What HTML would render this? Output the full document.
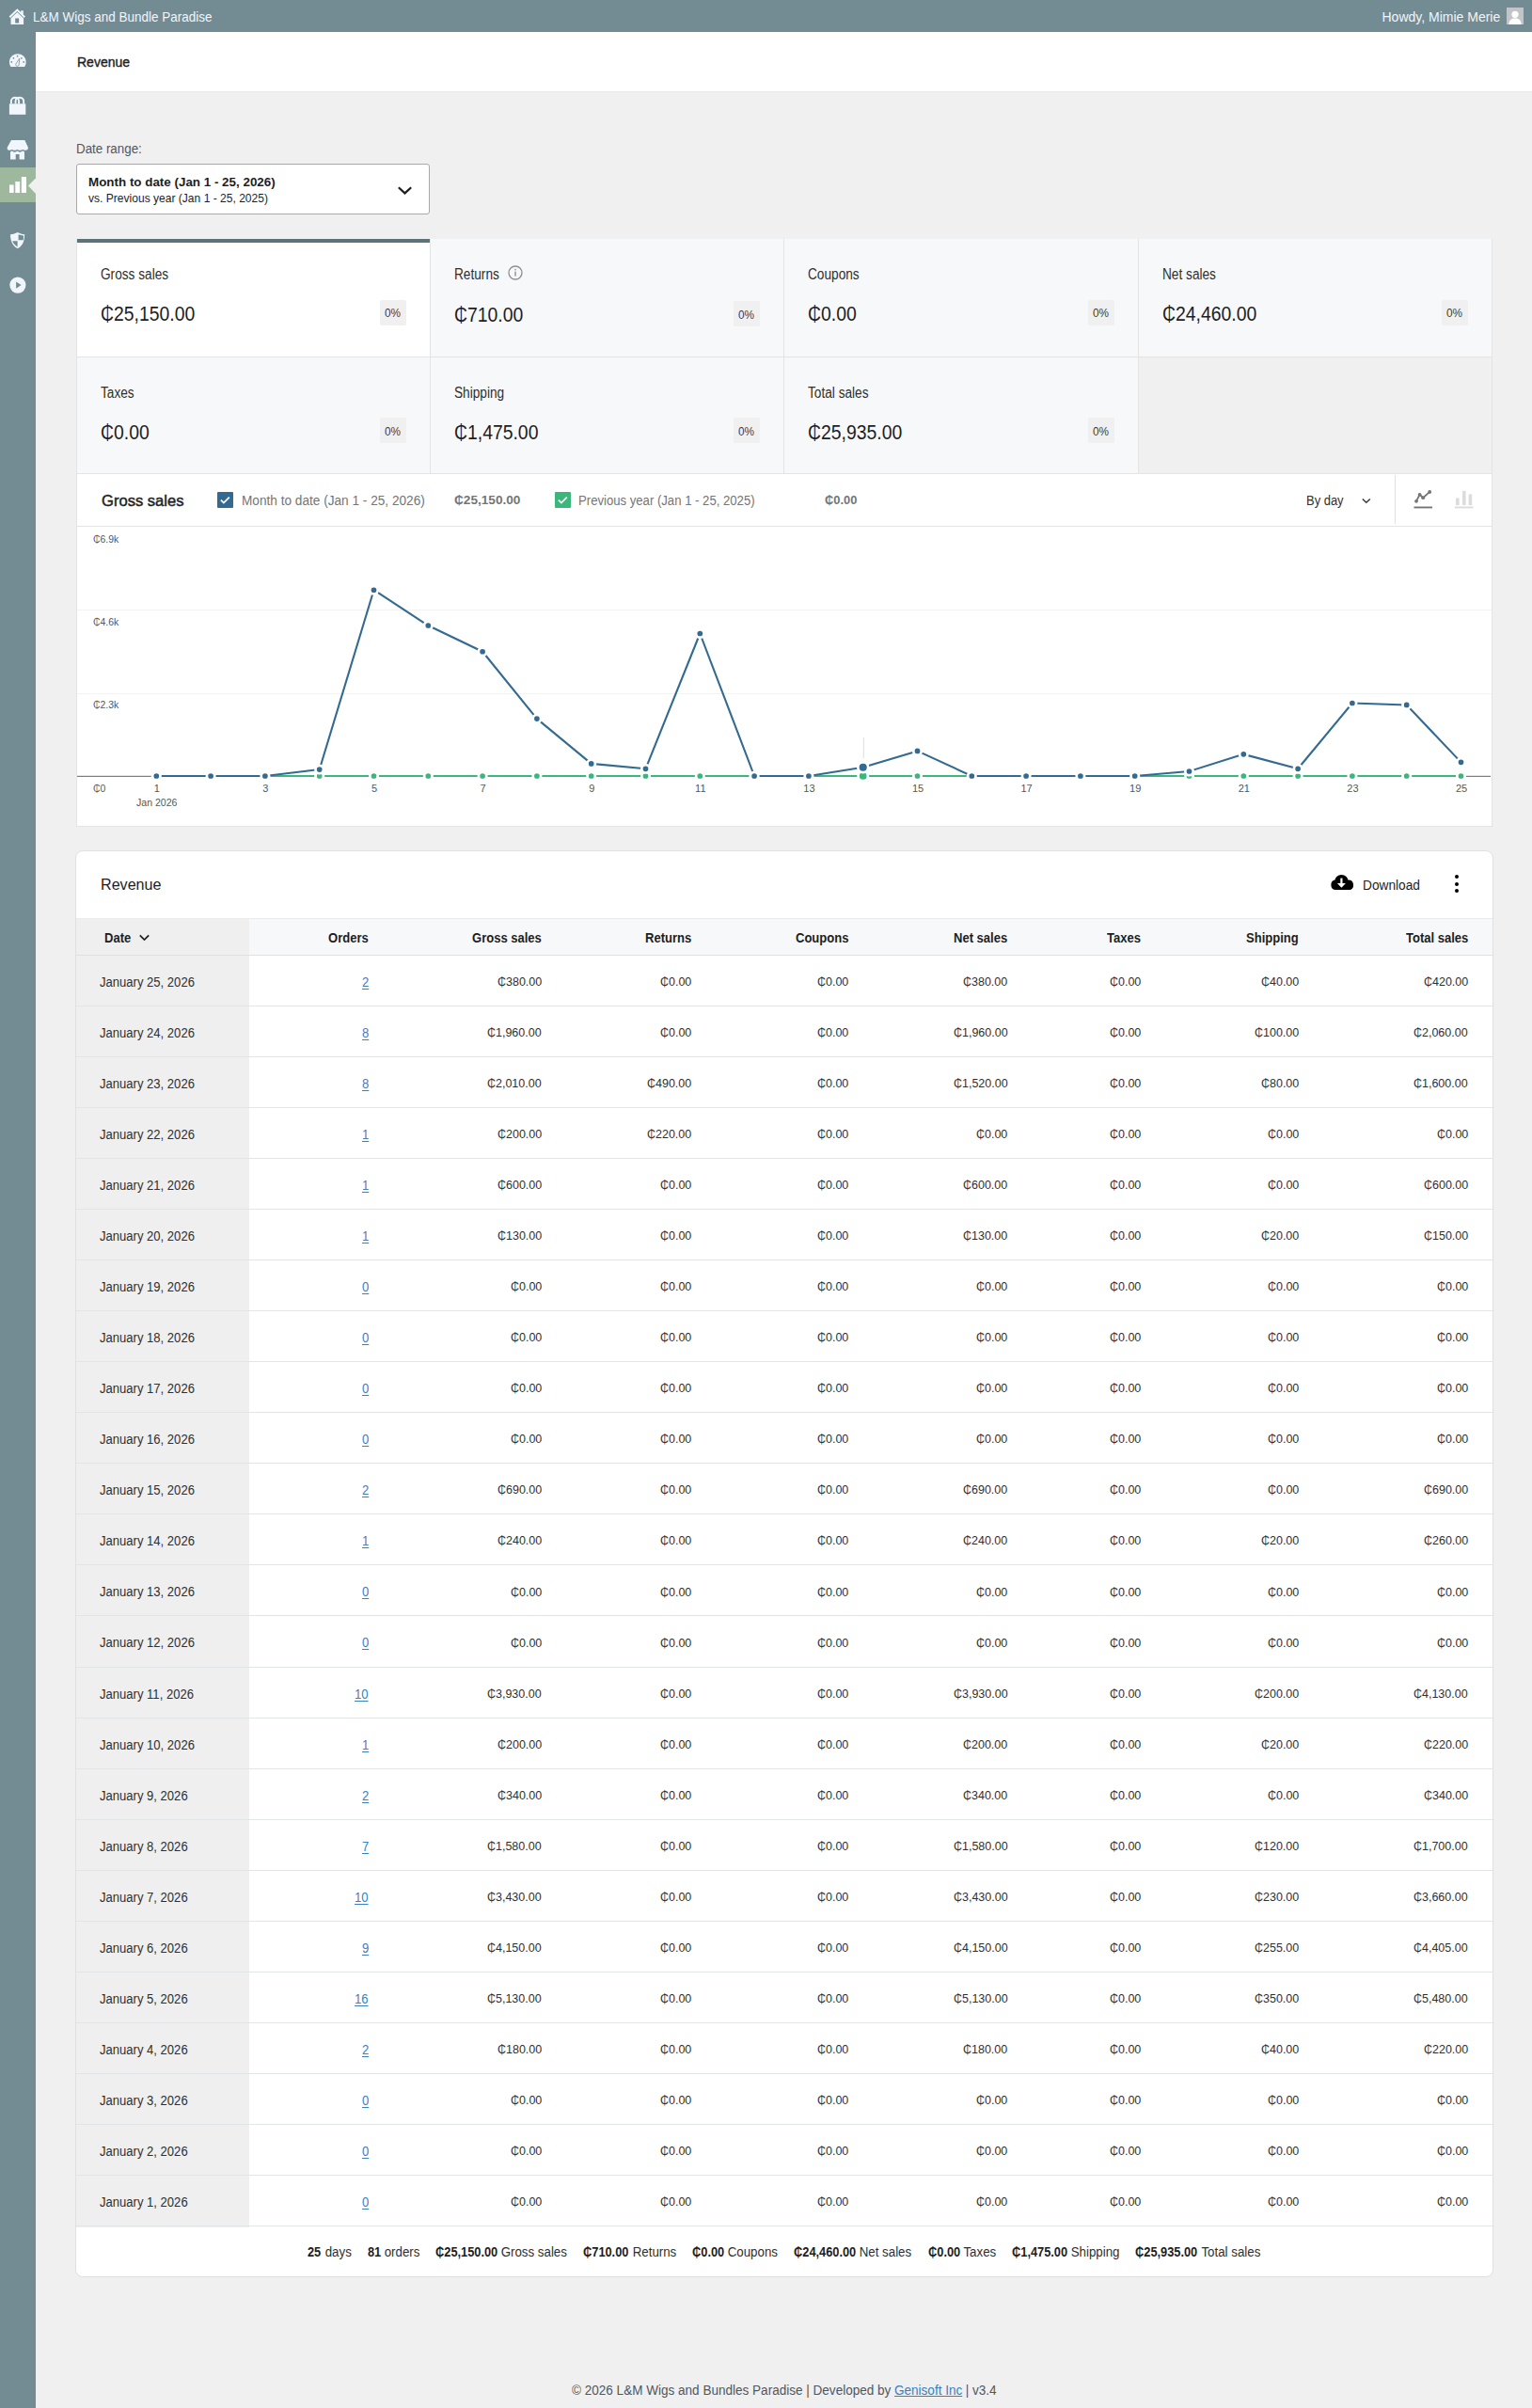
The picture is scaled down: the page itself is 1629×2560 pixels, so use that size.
<!DOCTYPE html>
<html><head><meta charset="utf-8"><title>Revenue</title>
<style>
html,body{margin:0;padding:0}
body{width:1629px;height:2560px;position:relative;overflow:hidden;background:#f0f0f0;font-family:"Liberation Sans",sans-serif}
.t{position:absolute;line-height:20px;white-space:nowrap}
svg{display:block}
</style></head><body>
<div style="position:absolute;left:0.00px;top:0.00px;width:1629.00px;height:34.00px;background:#738b93"></div>
<div style="position:absolute;left:0.00px;top:34.00px;width:38.00px;height:2526.00px;background:#738b93"></div>
<div style="position:absolute;left:38.00px;top:34.00px;width:1591.00px;height:63.50px;background:#fff"></div>
<div style="position:absolute;left:38.00px;top:96.50px;width:1591.00px;height:1.00px;background:#e9e9e9"></div>
<svg style="position:absolute;left:0;top:0" width="38" height="34" viewBox="0 0 38 34"><g fill="#f0f6fc"><path d="M9.6 17.5 L18.3 9.2 L22.2 12.9 L22.2 11.2 L24.8 11.2 L24.8 15.4 L27 17.5 L25.6 18.9 L18.3 11.9 L11 18.9 Z"/><path fill-rule="evenodd" d="M11.5 19.6 L18.3 13.1 L25.1 19.6 L25.1 26.1 L11.5 26.1 Z M16.2 19.6 L16.2 24.5 L20.1 24.5 L20.1 19.6 Z"/></g></svg>
<div class="t" style="left:35.20px;top:8.45px;font-size:14px;color:#f0f6fc;transform:scaleX(0.9632);transform-origin:0 0;">L&amp;M Wigs and Bundle Paradise</div>
<div class="t" style="left:1469.50px;top:8.35px;font-size:14px;color:#f0f6fc;">Howdy, Mimie Merie</div>
<svg style="position:absolute;left:1602px;top:8px" width="18" height="18" viewBox="0 0 18 18"><rect width="18" height="18" fill="#c3c4c7"/><circle cx="9" cy="7.3" r="3.6" fill="#fff"/><path d="M2.3 18 C2.6 13.4 5.2 11.6 9 11.6 C12.8 11.6 15.4 13.4 15.7 18 Z" fill="#fff"/></svg>
<svg style="position:absolute;left:0;top:34px" width="38" height="300" viewBox="0 34 38 300">
<path fill="#f0f6fc" d="M11.4 71 A8.9 8.9 0 1 1 26.2 71 Z"/>
<g fill="#738b93"><circle cx="18.6" cy="59.7" r="0.85"/><circle cx="14.4" cy="61.8" r="0.85"/><circle cx="22.9" cy="61.8" r="0.85"/><circle cx="12.3" cy="65.9" r="0.85"/><circle cx="25.2" cy="65.9" r="0.85"/></g>
<path d="M20.8 62.2 L17.3 67.3 A1.75 1.75 0 1 0 20.2 68.3 Z" fill="none" stroke="#738b93" stroke-width="0.75"/>
<rect x="9.9" y="110.3" width="17.4" height="11.5" fill="#f0f6fc"/>
<path d="M11.9 110.6 L11.9 107.5 A4.1 3.75 0 0 1 20.1 107.5 L20.1 110.6" fill="none" stroke="#f0f6fc" stroke-width="1.95"/>
<path d="M16.55 110.6 L16.55 107.5 A4.3 3.75 0 0 1 25.15 107.5 L25.15 110.6" fill="none" stroke="#f0f6fc" stroke-width="1.95"/>
<path fill="#f0f6fc" d="M12 149.1 L26.3 149.1 L29.9 156.8 C30.1 158.6 29 159.8 27.3 159.8 C25.9 159.8 25.2 158.9 24.3 158.9 C23.4 158.9 22.6 159.8 21.2 159.8 C19.8 159.8 19.2 158.9 18.4 158.9 C17.6 158.9 17 159.8 15.6 159.8 C14.2 159.8 13.5 158.9 12.6 158.9 C11.7 158.9 11 159.8 9.7 159.8 C8.2 159.8 7.5 158.6 7.7 156.8 Z"/>
<path fill="#f0f6fc" fill-rule="evenodd" d="M11 161.4 C11.8 161.2 12.2 160.6 12.7 160.6 C13.3 160.6 14 161.8 15.6 161.8 C17.2 161.8 17.8 160.6 18.4 160.6 C19 160.6 19.7 161.8 21.2 161.8 C22.7 161.8 23.4 160.6 24.1 160.6 C24.7 160.6 25.2 161.2 26 161.4 L26 169.6 L20.6 169.6 L20.6 164.1 L16.7 164.1 L16.7 169.6 L11 169.6 Z"/>
<path fill="#f0f6fc" d="M18.7 247 C16.5 248.3 13.8 249 11 249.2 C11 256.4 13.3 261.3 18.7 264.3 C24.1 261.3 26.2 256.4 26.2 249.2 C23.5 249 20.9 248.3 18.7 247 Z"/>
<path fill="#738b93" d="M19.6 249.2 L19.6 255.3 L24.8 255.3 C24.9 253.9 25 252.4 25 250.5 C23.1 250.3 21.3 249.9 19.6 249.2 Z"/>
<path fill="#738b93" d="M18.6 256.3 L18.6 262.4 C15.8 260.6 14 258.6 13.2 256.3 Z"/>
<circle cx="18.9" cy="303.1" r="8.6" fill="#f0f6fc"/>
<path fill="#738b93" d="M17.1 299.6 L22.6 303.1 L17.1 306.8 Z"/>
</svg>
<div style="position:absolute;left:0.00px;top:177.70px;width:38.00px;height:37.00px;background:#9db89d"></div>
<svg style="position:absolute;left:29.9px;top:189px" width="8.2" height="17.2" viewBox="0 0 8.2 17.2"><path d="M8.2 0 L0 8.6 L8.2 17.2 Z" fill="#f0f0f0"/></svg>
<svg style="position:absolute;left:9.7px;top:187.5px" width="18.5" height="17.5" viewBox="0 0 18.5 17.5"><rect x="0" y="8.5" width="4.6" height="9" fill="#fff"/><rect x="6.3" y="5" width="4.8" height="12.5" fill="#fff"/><rect x="12.8" y="0" width="5.4" height="17.5" fill="#fff"/></svg>
<div class="t" style="left:81.50px;top:55.90px;font-size:15px;color:#1e1e1e;transform:scaleX(0.9326);transform-origin:0 0;-webkit-text-stroke:0.4px #1e1e1e;">Revenue</div>
<div class="t" style="left:81.00px;top:148.15px;font-size:14px;color:#50575e;transform:scaleX(0.9541);transform-origin:0 0;">Date range:</div>
<div style="position:absolute;left:81.00px;top:174.40px;width:376.00px;height:53.20px;background:#fff;border:1px solid #a9a9a9;border-radius:3px;box-sizing:border-box"></div>
<div class="t" style="left:94.30px;top:184.32px;font-size:13.5px;color:#1e1e1e;font-weight:bold;transform:scaleX(0.9920);transform-origin:0 0;">Month to date (Jan 1 - 25, 2026)</div>
<div class="t" style="left:94.30px;top:201.29px;font-size:13px;color:#1e1e1e;transform:scaleX(0.9275);transform-origin:0 0;">vs. Previous year (Jan 1 - 25, 2025)</div>
<svg style="position:absolute;left:422px;top:196px" width="17" height="13" viewBox="0 0 17 13"><path d="M1.8 3.2 L8.5 9.4 L15.2 3.2" fill="none" stroke="#1e1e1e" stroke-width="2.2"/></svg>
<div style="position:absolute;left:81.00px;top:254.00px;width:1506.00px;height:249.50px;background:#f7f8f9"></div>
<div style="position:absolute;left:81.00px;top:254.00px;width:376.40px;height:125.50px;background:#fff"></div>
<div style="position:absolute;left:81.00px;top:254.00px;width:376.40px;height:4.30px;background:#5d737a"></div>
<div style="position:absolute;left:1210.40px;top:379.20px;width:376.10px;height:124.00px;background:#f0f0f0"></div>
<div style="position:absolute;left:456.90px;top:254.00px;width:1.00px;height:249.50px;background:#e4e4e4"></div>
<div style="position:absolute;left:833.00px;top:254.00px;width:1.00px;height:249.50px;background:#e4e4e4"></div>
<div style="position:absolute;left:1209.90px;top:254.00px;width:1.00px;height:249.50px;background:#e4e4e4"></div>
<div style="position:absolute;left:81.00px;top:378.60px;width:1506.00px;height:1.20px;background:#e4e4e4"></div>
<div style="position:absolute;left:81.00px;top:254.00px;width:1.00px;height:625.00px;background:#e4e4e4"></div>
<div style="position:absolute;left:1586.00px;top:254.00px;width:1.00px;height:625.00px;background:#e4e4e4"></div>
<div class="t" style="left:106.70px;top:281.95px;font-size:16px;color:#2f2f2f;transform:scaleX(0.8536);transform-origin:0 0;">Gross sales</div>
<div class="t" style="left:106.70px;top:324.07px;font-size:22.3px;color:#1e1e1e;transform:scaleX(0.8689);transform-origin:0 0;">₵25,150.00</div>
<div style="position:absolute;left:403.60px;top:318.50px;width:28.00px;height:27.00px;background:#f0f0f0;border-radius:2px"></div>
<div class="t" style="left:408.90px;top:323.47px;font-size:12.5px;color:#3c3c3c;transform:scaleX(0.9410);transform-origin:0 0;">0%</div>
<div class="t" style="left:483.10px;top:281.95px;font-size:16px;color:#2f2f2f;transform:scaleX(0.8536);transform-origin:0 0;">Returns</div>
<div class="t" style="left:483.10px;top:325.37px;font-size:22.3px;color:#1e1e1e;transform:scaleX(0.8689);transform-origin:0 0;">₵710.00</div>
<div style="position:absolute;left:779.70px;top:319.80px;width:28.00px;height:27.00px;background:#f0f0f0;border-radius:2px"></div>
<div class="t" style="left:785.00px;top:324.77px;font-size:12.5px;color:#3c3c3c;transform:scaleX(0.9410);transform-origin:0 0;">0%</div>
<div class="t" style="left:859.20px;top:281.95px;font-size:16px;color:#2f2f2f;transform:scaleX(0.8536);transform-origin:0 0;">Coupons</div>
<div class="t" style="left:859.20px;top:324.07px;font-size:22.3px;color:#1e1e1e;transform:scaleX(0.8689);transform-origin:0 0;">₵0.00</div>
<div style="position:absolute;left:1156.60px;top:318.50px;width:28.00px;height:27.00px;background:#f0f0f0;border-radius:2px"></div>
<div class="t" style="left:1161.90px;top:323.47px;font-size:12.5px;color:#3c3c3c;transform:scaleX(0.9410);transform-origin:0 0;">0%</div>
<div class="t" style="left:1236.10px;top:281.95px;font-size:16px;color:#2f2f2f;transform:scaleX(0.8536);transform-origin:0 0;">Net sales</div>
<div class="t" style="left:1236.10px;top:324.07px;font-size:22.3px;color:#1e1e1e;transform:scaleX(0.8689);transform-origin:0 0;">₵24,460.00</div>
<div style="position:absolute;left:1532.70px;top:318.50px;width:28.00px;height:27.00px;background:#f0f0f0;border-radius:2px"></div>
<div class="t" style="left:1538.00px;top:323.47px;font-size:12.5px;color:#3c3c3c;transform:scaleX(0.9410);transform-origin:0 0;">0%</div>
<div class="t" style="left:106.70px;top:407.65px;font-size:16px;color:#2f2f2f;transform:scaleX(0.8536);transform-origin:0 0;">Taxes</div>
<div class="t" style="left:106.70px;top:449.57px;font-size:22.3px;color:#1e1e1e;transform:scaleX(0.8689);transform-origin:0 0;">₵0.00</div>
<div style="position:absolute;left:403.60px;top:443.70px;width:28.00px;height:27.00px;background:#f0f0f0;border-radius:2px"></div>
<div class="t" style="left:408.90px;top:448.67px;font-size:12.5px;color:#3c3c3c;transform:scaleX(0.9410);transform-origin:0 0;">0%</div>
<div class="t" style="left:483.10px;top:407.65px;font-size:16px;color:#2f2f2f;transform:scaleX(0.8536);transform-origin:0 0;">Shipping</div>
<div class="t" style="left:483.10px;top:449.57px;font-size:22.3px;color:#1e1e1e;transform:scaleX(0.8689);transform-origin:0 0;">₵1,475.00</div>
<div style="position:absolute;left:779.70px;top:443.70px;width:28.00px;height:27.00px;background:#f0f0f0;border-radius:2px"></div>
<div class="t" style="left:785.00px;top:448.67px;font-size:12.5px;color:#3c3c3c;transform:scaleX(0.9410);transform-origin:0 0;">0%</div>
<div class="t" style="left:859.20px;top:407.65px;font-size:16px;color:#2f2f2f;transform:scaleX(0.8536);transform-origin:0 0;">Total sales</div>
<div class="t" style="left:859.20px;top:449.57px;font-size:22.3px;color:#1e1e1e;transform:scaleX(0.8689);transform-origin:0 0;">₵25,935.00</div>
<div style="position:absolute;left:1156.60px;top:443.70px;width:28.00px;height:27.00px;background:#f0f0f0;border-radius:2px"></div>
<div class="t" style="left:1161.90px;top:448.67px;font-size:12.5px;color:#3c3c3c;transform:scaleX(0.9410);transform-origin:0 0;">0%</div>
<svg style="position:absolute;left:539.6px;top:282.4px" width="16" height="16" viewBox="0 0 16 16"><circle cx="8" cy="8" r="7" fill="none" stroke="#8f8f8f" stroke-width="1.3"/><rect x="7.3" y="6.6" width="1.4" height="5.0" fill="#8f8f8f"/><rect x="7.3" y="3.9" width="1.4" height="1.5" fill="#8f8f8f"/></svg>
<div style="position:absolute;left:81.00px;top:503.20px;width:1506.00px;height:375.50px;background:#fff;border:1px solid #e4e4e4;box-sizing:border-box"></div>
<div style="position:absolute;left:81.00px;top:559.00px;width:1506.00px;height:1.00px;background:#e4e4e4"></div>
<div style="position:absolute;left:1483.00px;top:504.70px;width:1.00px;height:52.00px;background:#e0e0e0"></div>
<div class="t" style="left:107.60px;top:523.41px;font-size:17px;color:#1e1e1e;transform:scaleX(0.9749);transform-origin:0 0;-webkit-text-stroke:0.45px #1e1e1e;">Gross sales</div>
<svg style="position:absolute;left:230.8px;top:522.8px" width="17" height="17" viewBox="0 0 17 17"><rect x="0" y="0" width="17" height="17" rx="1" fill="#336a91"/><path d="M3.9 8.7 L6.9 11.6 L12.8 5.6" fill="none" stroke="#fff" stroke-width="1.8"/></svg>
<div class="t" style="left:256.90px;top:522.25px;font-size:14px;color:#757575;transform:scaleX(0.9739);transform-origin:0 0;">Month to date (Jan 1 - 25, 2026)</div>
<div class="t" style="left:482.60px;top:522.12px;font-size:13.5px;color:#757575;font-weight:bold;transform:scaleX(1.0085);transform-origin:0 0;">₵25,150.00</div>
<svg style="position:absolute;left:589.7px;top:522.8px" width="17" height="17" viewBox="0 0 17 17"><rect x="0" y="0" width="17" height="17" rx="1" fill="#3bb77b"/><path d="M3.9 8.7 L6.9 11.6 L12.8 5.6" fill="none" stroke="#fff" stroke-width="1.8"/></svg>
<div class="t" style="left:615.40px;top:522.25px;font-size:14px;color:#757575;transform:scaleX(0.9380);transform-origin:0 0;">Previous year (Jan 1 - 25, 2025)</div>
<div class="t" style="left:876.70px;top:522.12px;font-size:13.5px;color:#757575;font-weight:bold;transform:scaleX(0.9521);transform-origin:0 0;">₵0.00</div>
<div class="t" style="left:1388.70px;top:522.45px;font-size:14px;color:#2f2f2f;transform:scaleX(0.9252);transform-origin:0 0;">By day</div>
<svg style="position:absolute;left:1446px;top:527px" width="13" height="10" viewBox="1446 527 13 10"><path d="M1448.8 530.5 L1452.8 534.3 L1456.8 530.5" fill="none" stroke="#3a3a3a" stroke-width="1.5"/></svg>
<svg style="position:absolute;left:1503px;top:521px" width="21" height="21" viewBox="0 0 21 21"><path d="M3 11.8 L6.6 4.8 L10.2 8.2 L17.2 1.8" fill="none" stroke="#757575" stroke-width="1.8"/><circle cx="3" cy="11.8" r="1.9" fill="#757575"/><circle cx="6.6" cy="4.8" r="1.9" fill="#757575"/><circle cx="10.2" cy="8.2" r="1.9" fill="#757575"/><circle cx="17.2" cy="2" r="1.9" fill="#757575"/><rect x="0.5" y="17.5" width="19.5" height="1.9" fill="#757575"/></svg>
<svg style="position:absolute;left:1546.5px;top:521px" width="21" height="21" viewBox="0 0 21 21"><rect x="1" y="8.5" width="3.6" height="7.6" fill="#dcdcde"/><rect x="8" y="1" width="3.6" height="15.1" fill="#dcdcde"/><rect x="14.6" y="4.5" width="3.6" height="11.6" fill="#dcdcde"/><rect x="0" y="17.5" width="19.5" height="1.9" fill="#dcdcde"/></svg>
<svg style="position:absolute;left:81px;top:560px" width="1505" height="318" viewBox="81 560 1505 318"><rect x="82" y="648" width="1504" height="1" fill="#f2f2f2"/><rect x="82" y="737" width="1504" height="1" fill="#f2f2f2"/><rect x="82" y="824.8" width="1503" height="1.1" fill="#707070"/><rect x="917.8" y="784" width="1" height="22" fill="#dcdcde"/><polyline points="166.30,825.00 224.10,825.00 281.90,825.00 339.70,825.00 397.50,825.00 455.30,825.00 513.10,825.00 570.90,825.00 628.70,825.00 686.50,825.00 744.30,825.00 802.10,825.00 859.90,825.00 917.70,825.00 975.50,825.00 1033.30,825.00 1091.10,825.00 1148.90,825.00 1206.70,825.00 1264.50,825.00 1322.30,825.00 1380.10,825.00 1437.90,825.00 1495.70,825.00 1553.50,825.00" fill="none" stroke="#3bb77b" stroke-width="2.1"/><circle cx="166.30" cy="825.0" r="4.2" fill="#3bb77b" stroke="#fff" stroke-width="2.7"/><circle cx="224.10" cy="825.0" r="4.2" fill="#3bb77b" stroke="#fff" stroke-width="2.7"/><circle cx="281.90" cy="825.0" r="4.2" fill="#3bb77b" stroke="#fff" stroke-width="2.7"/><circle cx="339.70" cy="825.0" r="4.2" fill="#3bb77b" stroke="#fff" stroke-width="2.7"/><circle cx="397.50" cy="825.0" r="4.2" fill="#3bb77b" stroke="#fff" stroke-width="2.7"/><circle cx="455.30" cy="825.0" r="4.2" fill="#3bb77b" stroke="#fff" stroke-width="2.7"/><circle cx="513.10" cy="825.0" r="4.2" fill="#3bb77b" stroke="#fff" stroke-width="2.7"/><circle cx="570.90" cy="825.0" r="4.2" fill="#3bb77b" stroke="#fff" stroke-width="2.7"/><circle cx="628.70" cy="825.0" r="4.2" fill="#3bb77b" stroke="#fff" stroke-width="2.7"/><circle cx="686.50" cy="825.0" r="4.2" fill="#3bb77b" stroke="#fff" stroke-width="2.7"/><circle cx="744.30" cy="825.0" r="4.2" fill="#3bb77b" stroke="#fff" stroke-width="2.7"/><circle cx="802.10" cy="825.0" r="4.2" fill="#3bb77b" stroke="#fff" stroke-width="2.7"/><circle cx="859.90" cy="825.0" r="4.2" fill="#3bb77b" stroke="#fff" stroke-width="2.7"/><circle cx="917.70" cy="825.0" r="5.2" fill="#3bb77b" stroke="#fff" stroke-width="2.7"/><circle cx="975.50" cy="825.0" r="4.2" fill="#3bb77b" stroke="#fff" stroke-width="2.7"/><circle cx="1033.30" cy="825.0" r="4.2" fill="#3bb77b" stroke="#fff" stroke-width="2.7"/><circle cx="1091.10" cy="825.0" r="4.2" fill="#3bb77b" stroke="#fff" stroke-width="2.7"/><circle cx="1148.90" cy="825.0" r="4.2" fill="#3bb77b" stroke="#fff" stroke-width="2.7"/><circle cx="1206.70" cy="825.0" r="4.2" fill="#3bb77b" stroke="#fff" stroke-width="2.7"/><circle cx="1264.50" cy="825.0" r="4.2" fill="#3bb77b" stroke="#fff" stroke-width="2.7"/><circle cx="1322.30" cy="825.0" r="4.2" fill="#3bb77b" stroke="#fff" stroke-width="2.7"/><circle cx="1380.10" cy="825.0" r="4.2" fill="#3bb77b" stroke="#fff" stroke-width="2.7"/><circle cx="1437.90" cy="825.0" r="4.2" fill="#3bb77b" stroke="#fff" stroke-width="2.7"/><circle cx="1495.70" cy="825.0" r="4.2" fill="#3bb77b" stroke="#fff" stroke-width="2.7"/><circle cx="1553.50" cy="825.0" r="4.2" fill="#3bb77b" stroke="#fff" stroke-width="2.7"/><polyline points="166.30,825.00 224.10,825.00 281.90,825.00 339.70,818.06 397.50,627.23 455.30,665.01 513.10,692.77 570.90,764.09 628.70,811.89 686.50,817.29 744.30,673.50 802.10,825.00 859.90,825.00 917.70,815.75 975.50,798.40 1033.30,825.00 1091.10,825.00 1148.90,825.00 1206.70,825.00 1264.50,819.99 1322.30,801.87 1380.10,817.29 1437.90,747.51 1495.70,749.44 1553.50,810.35" fill="none" stroke="#336a91" stroke-width="2.1" stroke-linejoin="round"/><circle cx="166.30" cy="825.00" r="4.2" fill="#336a91" stroke="#fff" stroke-width="2.7"/><circle cx="224.10" cy="825.00" r="4.2" fill="#336a91" stroke="#fff" stroke-width="2.7"/><circle cx="281.90" cy="825.00" r="4.2" fill="#336a91" stroke="#fff" stroke-width="2.7"/><circle cx="339.70" cy="818.06" r="4.2" fill="#336a91" stroke="#fff" stroke-width="2.7"/><circle cx="397.50" cy="627.23" r="4.2" fill="#336a91" stroke="#fff" stroke-width="2.7"/><circle cx="455.30" cy="665.01" r="4.2" fill="#336a91" stroke="#fff" stroke-width="2.7"/><circle cx="513.10" cy="692.77" r="4.2" fill="#336a91" stroke="#fff" stroke-width="2.7"/><circle cx="570.90" cy="764.09" r="4.2" fill="#336a91" stroke="#fff" stroke-width="2.7"/><circle cx="628.70" cy="811.89" r="4.2" fill="#336a91" stroke="#fff" stroke-width="2.7"/><circle cx="686.50" cy="817.29" r="4.2" fill="#336a91" stroke="#fff" stroke-width="2.7"/><circle cx="744.30" cy="673.50" r="4.2" fill="#336a91" stroke="#fff" stroke-width="2.7"/><circle cx="802.10" cy="825.00" r="4.2" fill="#336a91" stroke="#fff" stroke-width="2.7"/><circle cx="859.90" cy="825.00" r="4.2" fill="#336a91" stroke="#fff" stroke-width="2.7"/><circle cx="917.70" cy="815.75" r="5.4" fill="#336a91" stroke="#fff" stroke-width="2.7"/><circle cx="975.50" cy="798.40" r="4.2" fill="#336a91" stroke="#fff" stroke-width="2.7"/><circle cx="1033.30" cy="825.00" r="4.2" fill="#336a91" stroke="#fff" stroke-width="2.7"/><circle cx="1091.10" cy="825.00" r="4.2" fill="#336a91" stroke="#fff" stroke-width="2.7"/><circle cx="1148.90" cy="825.00" r="4.2" fill="#336a91" stroke="#fff" stroke-width="2.7"/><circle cx="1206.70" cy="825.00" r="4.2" fill="#336a91" stroke="#fff" stroke-width="2.7"/><circle cx="1264.50" cy="819.99" r="4.2" fill="#336a91" stroke="#fff" stroke-width="2.7"/><circle cx="1322.30" cy="801.87" r="4.2" fill="#336a91" stroke="#fff" stroke-width="2.7"/><circle cx="1380.10" cy="817.29" r="4.2" fill="#336a91" stroke="#fff" stroke-width="2.7"/><circle cx="1437.90" cy="747.51" r="4.2" fill="#336a91" stroke="#fff" stroke-width="2.7"/><circle cx="1495.70" cy="749.44" r="4.2" fill="#336a91" stroke="#fff" stroke-width="2.7"/><circle cx="1553.50" cy="810.35" r="4.2" fill="#336a91" stroke="#fff" stroke-width="2.7"/></svg>
<div class="t" style="left:98.90px;top:563.19px;font-size:11px;color:#50575e;transform:scaleX(0.9466);transform-origin:0 0;">₵6.9k</div>
<div class="t" style="left:98.90px;top:650.69px;font-size:11px;color:#50575e;transform:scaleX(0.9466);transform-origin:0 0;">₵4.6k</div>
<div class="t" style="left:98.90px;top:739.09px;font-size:11px;color:#50575e;transform:scaleX(0.9466);transform-origin:0 0;">₵2.3k</div>
<div class="t" style="left:98.90px;top:827.99px;font-size:11px;color:#50575e;transform:scaleX(0.9466);transform-origin:0 0;">₵0</div>
<div class="t" style="left:163.74px;top:828.49px;font-size:11px;color:#50575e;">1</div>
<div class="t" style="left:279.34px;top:828.49px;font-size:11px;color:#50575e;">3</div>
<div class="t" style="left:394.94px;top:828.49px;font-size:11px;color:#50575e;">5</div>
<div class="t" style="left:510.54px;top:828.49px;font-size:11px;color:#50575e;">7</div>
<div class="t" style="left:626.14px;top:828.49px;font-size:11px;color:#50575e;">9</div>
<div class="t" style="left:739.09px;top:828.49px;font-size:11px;color:#50575e;">11</div>
<div class="t" style="left:854.28px;top:828.49px;font-size:11px;color:#50575e;">13</div>
<div class="t" style="left:969.88px;top:828.49px;font-size:11px;color:#50575e;">15</div>
<div class="t" style="left:1085.48px;top:828.49px;font-size:11px;color:#50575e;">17</div>
<div class="t" style="left:1201.08px;top:828.49px;font-size:11px;color:#50575e;">19</div>
<div class="t" style="left:1316.68px;top:828.49px;font-size:11px;color:#50575e;">21</div>
<div class="t" style="left:1432.28px;top:828.49px;font-size:11px;color:#50575e;">23</div>
<div class="t" style="left:1547.88px;top:828.49px;font-size:11px;color:#50575e;">25</div>
<div class="t" style="left:145.25px;top:842.79px;font-size:11px;color:#50575e;transform:scaleX(0.9610);transform-origin:0 0;">Jan 2026</div>
<div style="position:absolute;left:80.00px;top:903.50px;width:1508.00px;height:1517.50px;background:#fff;border:1px solid #e0e0e0;border-radius:8px;box-sizing:border-box"></div>
<div class="t" style="left:106.50px;top:930.91px;font-size:17px;color:#1e1e1e;transform:scaleX(0.9478);transform-origin:0 0;">Revenue</div>
<svg style="position:absolute;left:1410px;top:925px" width="35" height="25" viewBox="1410 925 35 25"><g fill="#000"><rect x="1415.4" y="935.5" width="23.5" height="10.6" rx="4.6"/><circle cx="1426.4" cy="937.2" r="7.3"/><circle cx="1434.2" cy="941.4" r="4.7"/></g><g fill="#fff"><rect x="1425.3" y="933.6" width="2.2" height="6"/><path d="M1421.9 939 L1430.9 939 L1426.4 943.8 Z"/></g></svg>
<div class="t" style="left:1448.80px;top:931.15px;font-size:14px;color:#1e1e1e;transform:scaleX(0.9781);transform-origin:0 0;">Download</div>
<div style="position:absolute;left:1546.5px;top:930.2px;width:4.2px;height:4.2px;border-radius:50%;background:#000"></div>
<div style="position:absolute;left:1546.5px;top:937.7px;width:4.2px;height:4.2px;border-radius:50%;background:#000"></div>
<div style="position:absolute;left:1546.5px;top:945.3px;width:4.2px;height:4.2px;border-radius:50%;background:#000"></div>
<div style="position:absolute;left:81.00px;top:976.20px;width:1506.00px;height:39.30px;background:#f7f8f9"></div>
<div style="position:absolute;left:81.00px;top:976.20px;width:184.40px;height:39.30px;background:#efefef"></div>
<div style="position:absolute;left:81.00px;top:975.90px;width:1506.00px;height:1.00px;background:#ebebeb"></div>
<div style="position:absolute;left:81.00px;top:1015.00px;width:1506.00px;height:1.00px;background:#e0e0e0"></div>
<div class="t" style="left:111.00px;top:987.25px;font-size:14px;color:#1e1e1e;font-weight:bold;transform:scaleX(0.9300);transform-origin:0 0;">Date</div>
<svg style="position:absolute;left:147px;top:992px" width="13" height="10" viewBox="0 0 13 10"><path d="M1.8 2.4 L6.5 7 L11.2 2.4" fill="none" stroke="#1e1e1e" stroke-width="1.7"/></svg>
<div class="t" style="left:348.80px;top:987.25px;font-size:14px;color:#1e1e1e;font-weight:bold;transform:scaleX(0.9300);transform-origin:0 0;">Orders</div>
<div class="t" style="left:502.17px;top:987.25px;font-size:14px;color:#1e1e1e;font-weight:bold;transform:scaleX(0.9300);transform-origin:0 0;">Gross sales</div>
<div class="t" style="left:685.80px;top:987.25px;font-size:14px;color:#1e1e1e;font-weight:bold;transform:scaleX(0.9300);transform-origin:0 0;">Returns</div>
<div class="t" style="left:845.59px;top:987.25px;font-size:14px;color:#1e1e1e;font-weight:bold;transform:scaleX(0.9300);transform-origin:0 0;">Coupons</div>
<div class="t" style="left:1014.32px;top:987.25px;font-size:14px;color:#1e1e1e;font-weight:bold;transform:scaleX(0.9300);transform-origin:0 0;">Net sales</div>
<div class="t" style="left:1177.05px;top:987.25px;font-size:14px;color:#1e1e1e;font-weight:bold;transform:scaleX(0.9300);transform-origin:0 0;">Taxes</div>
<div class="t" style="left:1325.31px;top:987.25px;font-size:14px;color:#1e1e1e;font-weight:bold;transform:scaleX(0.9300);transform-origin:0 0;">Shipping</div>
<div class="t" style="left:1494.67px;top:987.25px;font-size:14px;color:#1e1e1e;font-weight:bold;transform:scaleX(0.9300);transform-origin:0 0;">Total sales</div>
<div style="position:absolute;left:81.00px;top:1016.00px;width:184.40px;height:1351.70px;background:#efefef"></div>
<div style="position:absolute;left:81.00px;top:1069.00px;width:1506.00px;height:1.00px;background:#e3e4e5"></div>
<div class="t" style="left:105.90px;top:1033.55px;font-size:14px;color:#2f2f2f;transform:scaleX(0.9326);transform-origin:0 0;">January 25, 2026</div>
<div class="t" style="left:384.54px;top:1033.55px;font-size:14px;color:#3582c4;transform:scaleX(0.9326);transform-origin:0 0;text-decoration:underline;text-underline-offset:1.5px;">2</div>
<div class="t" style="left:528.81px;top:1033.72px;font-size:13.5px;color:#2f2f2f;transform:scaleX(0.9246);transform-origin:0 0;">₵380.00</div>
<div class="t" style="left:701.69px;top:1033.72px;font-size:13.5px;color:#2f2f2f;transform:scaleX(0.9246);transform-origin:0 0;">₵0.00</div>
<div class="t" style="left:868.69px;top:1033.72px;font-size:13.5px;color:#2f2f2f;transform:scaleX(0.9246);transform-origin:0 0;">₵0.00</div>
<div class="t" style="left:1024.31px;top:1033.72px;font-size:13.5px;color:#2f2f2f;transform:scaleX(0.9246);transform-origin:0 0;">₵380.00</div>
<div class="t" style="left:1179.69px;top:1033.72px;font-size:13.5px;color:#2f2f2f;transform:scaleX(0.9246);transform-origin:0 0;">₵0.00</div>
<div class="t" style="left:1340.75px;top:1033.72px;font-size:13.5px;color:#2f2f2f;transform:scaleX(0.9246);transform-origin:0 0;">₵40.00</div>
<div class="t" style="left:1513.81px;top:1033.72px;font-size:13.5px;color:#2f2f2f;transform:scaleX(0.9246);transform-origin:0 0;">₵420.00</div>
<div style="position:absolute;left:81.00px;top:1123.00px;width:1506.00px;height:1.00px;background:#e3e4e5"></div>
<div class="t" style="left:105.90px;top:1087.61px;font-size:14px;color:#2f2f2f;transform:scaleX(0.9326);transform-origin:0 0;">January 24, 2026</div>
<div class="t" style="left:384.54px;top:1087.61px;font-size:14px;color:#3582c4;transform:scaleX(0.9326);transform-origin:0 0;text-decoration:underline;text-underline-offset:1.5px;">8</div>
<div class="t" style="left:518.40px;top:1087.79px;font-size:13.5px;color:#2f2f2f;transform:scaleX(0.9246);transform-origin:0 0;">₵1,960.00</div>
<div class="t" style="left:701.69px;top:1087.79px;font-size:13.5px;color:#2f2f2f;transform:scaleX(0.9246);transform-origin:0 0;">₵0.00</div>
<div class="t" style="left:868.69px;top:1087.79px;font-size:13.5px;color:#2f2f2f;transform:scaleX(0.9246);transform-origin:0 0;">₵0.00</div>
<div class="t" style="left:1013.90px;top:1087.79px;font-size:13.5px;color:#2f2f2f;transform:scaleX(0.9246);transform-origin:0 0;">₵1,960.00</div>
<div class="t" style="left:1179.69px;top:1087.79px;font-size:13.5px;color:#2f2f2f;transform:scaleX(0.9246);transform-origin:0 0;">₵0.00</div>
<div class="t" style="left:1333.81px;top:1087.79px;font-size:13.5px;color:#2f2f2f;transform:scaleX(0.9246);transform-origin:0 0;">₵100.00</div>
<div class="t" style="left:1503.40px;top:1087.79px;font-size:13.5px;color:#2f2f2f;transform:scaleX(0.9246);transform-origin:0 0;">₵2,060.00</div>
<div style="position:absolute;left:81.00px;top:1177.00px;width:1506.00px;height:1.00px;background:#e3e4e5"></div>
<div class="t" style="left:105.90px;top:1141.68px;font-size:14px;color:#2f2f2f;transform:scaleX(0.9326);transform-origin:0 0;">January 23, 2026</div>
<div class="t" style="left:384.54px;top:1141.68px;font-size:14px;color:#3582c4;transform:scaleX(0.9326);transform-origin:0 0;text-decoration:underline;text-underline-offset:1.5px;">8</div>
<div class="t" style="left:518.40px;top:1141.86px;font-size:13.5px;color:#2f2f2f;transform:scaleX(0.9246);transform-origin:0 0;">₵2,010.00</div>
<div class="t" style="left:687.81px;top:1141.86px;font-size:13.5px;color:#2f2f2f;transform:scaleX(0.9246);transform-origin:0 0;">₵490.00</div>
<div class="t" style="left:868.69px;top:1141.86px;font-size:13.5px;color:#2f2f2f;transform:scaleX(0.9246);transform-origin:0 0;">₵0.00</div>
<div class="t" style="left:1013.90px;top:1141.86px;font-size:13.5px;color:#2f2f2f;transform:scaleX(0.9246);transform-origin:0 0;">₵1,520.00</div>
<div class="t" style="left:1179.69px;top:1141.86px;font-size:13.5px;color:#2f2f2f;transform:scaleX(0.9246);transform-origin:0 0;">₵0.00</div>
<div class="t" style="left:1340.75px;top:1141.86px;font-size:13.5px;color:#2f2f2f;transform:scaleX(0.9246);transform-origin:0 0;">₵80.00</div>
<div class="t" style="left:1503.40px;top:1141.86px;font-size:13.5px;color:#2f2f2f;transform:scaleX(0.9246);transform-origin:0 0;">₵1,600.00</div>
<div style="position:absolute;left:81.00px;top:1231.00px;width:1506.00px;height:1.00px;background:#e3e4e5"></div>
<div class="t" style="left:105.90px;top:1195.75px;font-size:14px;color:#2f2f2f;transform:scaleX(0.9326);transform-origin:0 0;">January 22, 2026</div>
<div class="t" style="left:384.54px;top:1195.75px;font-size:14px;color:#3582c4;transform:scaleX(0.9326);transform-origin:0 0;text-decoration:underline;text-underline-offset:1.5px;">1</div>
<div class="t" style="left:528.81px;top:1195.92px;font-size:13.5px;color:#2f2f2f;transform:scaleX(0.9246);transform-origin:0 0;">₵200.00</div>
<div class="t" style="left:687.81px;top:1195.92px;font-size:13.5px;color:#2f2f2f;transform:scaleX(0.9246);transform-origin:0 0;">₵220.00</div>
<div class="t" style="left:868.69px;top:1195.92px;font-size:13.5px;color:#2f2f2f;transform:scaleX(0.9246);transform-origin:0 0;">₵0.00</div>
<div class="t" style="left:1038.19px;top:1195.92px;font-size:13.5px;color:#2f2f2f;transform:scaleX(0.9246);transform-origin:0 0;">₵0.00</div>
<div class="t" style="left:1179.69px;top:1195.92px;font-size:13.5px;color:#2f2f2f;transform:scaleX(0.9246);transform-origin:0 0;">₵0.00</div>
<div class="t" style="left:1347.69px;top:1195.92px;font-size:13.5px;color:#2f2f2f;transform:scaleX(0.9246);transform-origin:0 0;">₵0.00</div>
<div class="t" style="left:1527.69px;top:1195.92px;font-size:13.5px;color:#2f2f2f;transform:scaleX(0.9246);transform-origin:0 0;">₵0.00</div>
<div style="position:absolute;left:81.00px;top:1285.00px;width:1506.00px;height:1.00px;background:#e3e4e5"></div>
<div class="t" style="left:105.90px;top:1249.82px;font-size:14px;color:#2f2f2f;transform:scaleX(0.9326);transform-origin:0 0;">January 21, 2026</div>
<div class="t" style="left:384.54px;top:1249.82px;font-size:14px;color:#3582c4;transform:scaleX(0.9326);transform-origin:0 0;text-decoration:underline;text-underline-offset:1.5px;">1</div>
<div class="t" style="left:528.81px;top:1249.99px;font-size:13.5px;color:#2f2f2f;transform:scaleX(0.9246);transform-origin:0 0;">₵600.00</div>
<div class="t" style="left:701.69px;top:1249.99px;font-size:13.5px;color:#2f2f2f;transform:scaleX(0.9246);transform-origin:0 0;">₵0.00</div>
<div class="t" style="left:868.69px;top:1249.99px;font-size:13.5px;color:#2f2f2f;transform:scaleX(0.9246);transform-origin:0 0;">₵0.00</div>
<div class="t" style="left:1024.31px;top:1249.99px;font-size:13.5px;color:#2f2f2f;transform:scaleX(0.9246);transform-origin:0 0;">₵600.00</div>
<div class="t" style="left:1179.69px;top:1249.99px;font-size:13.5px;color:#2f2f2f;transform:scaleX(0.9246);transform-origin:0 0;">₵0.00</div>
<div class="t" style="left:1347.69px;top:1249.99px;font-size:13.5px;color:#2f2f2f;transform:scaleX(0.9246);transform-origin:0 0;">₵0.00</div>
<div class="t" style="left:1513.81px;top:1249.99px;font-size:13.5px;color:#2f2f2f;transform:scaleX(0.9246);transform-origin:0 0;">₵600.00</div>
<div style="position:absolute;left:81.00px;top:1339.00px;width:1506.00px;height:1.00px;background:#e3e4e5"></div>
<div class="t" style="left:105.90px;top:1303.89px;font-size:14px;color:#2f2f2f;transform:scaleX(0.9326);transform-origin:0 0;">January 20, 2026</div>
<div class="t" style="left:384.54px;top:1303.89px;font-size:14px;color:#3582c4;transform:scaleX(0.9326);transform-origin:0 0;text-decoration:underline;text-underline-offset:1.5px;">1</div>
<div class="t" style="left:528.81px;top:1304.06px;font-size:13.5px;color:#2f2f2f;transform:scaleX(0.9246);transform-origin:0 0;">₵130.00</div>
<div class="t" style="left:701.69px;top:1304.06px;font-size:13.5px;color:#2f2f2f;transform:scaleX(0.9246);transform-origin:0 0;">₵0.00</div>
<div class="t" style="left:868.69px;top:1304.06px;font-size:13.5px;color:#2f2f2f;transform:scaleX(0.9246);transform-origin:0 0;">₵0.00</div>
<div class="t" style="left:1024.31px;top:1304.06px;font-size:13.5px;color:#2f2f2f;transform:scaleX(0.9246);transform-origin:0 0;">₵130.00</div>
<div class="t" style="left:1179.69px;top:1304.06px;font-size:13.5px;color:#2f2f2f;transform:scaleX(0.9246);transform-origin:0 0;">₵0.00</div>
<div class="t" style="left:1340.75px;top:1304.06px;font-size:13.5px;color:#2f2f2f;transform:scaleX(0.9246);transform-origin:0 0;">₵20.00</div>
<div class="t" style="left:1513.81px;top:1304.06px;font-size:13.5px;color:#2f2f2f;transform:scaleX(0.9246);transform-origin:0 0;">₵150.00</div>
<div style="position:absolute;left:81.00px;top:1393.00px;width:1506.00px;height:1.00px;background:#e3e4e5"></div>
<div class="t" style="left:105.90px;top:1357.95px;font-size:14px;color:#2f2f2f;transform:scaleX(0.9326);transform-origin:0 0;">January 19, 2026</div>
<div class="t" style="left:384.54px;top:1357.95px;font-size:14px;color:#3582c4;transform:scaleX(0.9326);transform-origin:0 0;text-decoration:underline;text-underline-offset:1.5px;">0</div>
<div class="t" style="left:542.69px;top:1358.13px;font-size:13.5px;color:#2f2f2f;transform:scaleX(0.9246);transform-origin:0 0;">₵0.00</div>
<div class="t" style="left:701.69px;top:1358.13px;font-size:13.5px;color:#2f2f2f;transform:scaleX(0.9246);transform-origin:0 0;">₵0.00</div>
<div class="t" style="left:868.69px;top:1358.13px;font-size:13.5px;color:#2f2f2f;transform:scaleX(0.9246);transform-origin:0 0;">₵0.00</div>
<div class="t" style="left:1038.19px;top:1358.13px;font-size:13.5px;color:#2f2f2f;transform:scaleX(0.9246);transform-origin:0 0;">₵0.00</div>
<div class="t" style="left:1179.69px;top:1358.13px;font-size:13.5px;color:#2f2f2f;transform:scaleX(0.9246);transform-origin:0 0;">₵0.00</div>
<div class="t" style="left:1347.69px;top:1358.13px;font-size:13.5px;color:#2f2f2f;transform:scaleX(0.9246);transform-origin:0 0;">₵0.00</div>
<div class="t" style="left:1527.69px;top:1358.13px;font-size:13.5px;color:#2f2f2f;transform:scaleX(0.9246);transform-origin:0 0;">₵0.00</div>
<div style="position:absolute;left:81.00px;top:1447.00px;width:1506.00px;height:1.00px;background:#e3e4e5"></div>
<div class="t" style="left:105.90px;top:1412.02px;font-size:14px;color:#2f2f2f;transform:scaleX(0.9326);transform-origin:0 0;">January 18, 2026</div>
<div class="t" style="left:384.54px;top:1412.02px;font-size:14px;color:#3582c4;transform:scaleX(0.9326);transform-origin:0 0;text-decoration:underline;text-underline-offset:1.5px;">0</div>
<div class="t" style="left:542.69px;top:1412.20px;font-size:13.5px;color:#2f2f2f;transform:scaleX(0.9246);transform-origin:0 0;">₵0.00</div>
<div class="t" style="left:701.69px;top:1412.20px;font-size:13.5px;color:#2f2f2f;transform:scaleX(0.9246);transform-origin:0 0;">₵0.00</div>
<div class="t" style="left:868.69px;top:1412.20px;font-size:13.5px;color:#2f2f2f;transform:scaleX(0.9246);transform-origin:0 0;">₵0.00</div>
<div class="t" style="left:1038.19px;top:1412.20px;font-size:13.5px;color:#2f2f2f;transform:scaleX(0.9246);transform-origin:0 0;">₵0.00</div>
<div class="t" style="left:1179.69px;top:1412.20px;font-size:13.5px;color:#2f2f2f;transform:scaleX(0.9246);transform-origin:0 0;">₵0.00</div>
<div class="t" style="left:1347.69px;top:1412.20px;font-size:13.5px;color:#2f2f2f;transform:scaleX(0.9246);transform-origin:0 0;">₵0.00</div>
<div class="t" style="left:1527.69px;top:1412.20px;font-size:13.5px;color:#2f2f2f;transform:scaleX(0.9246);transform-origin:0 0;">₵0.00</div>
<div style="position:absolute;left:81.00px;top:1501.00px;width:1506.00px;height:1.00px;background:#e3e4e5"></div>
<div class="t" style="left:105.90px;top:1466.09px;font-size:14px;color:#2f2f2f;transform:scaleX(0.9326);transform-origin:0 0;">January 17, 2026</div>
<div class="t" style="left:384.54px;top:1466.09px;font-size:14px;color:#3582c4;transform:scaleX(0.9326);transform-origin:0 0;text-decoration:underline;text-underline-offset:1.5px;">0</div>
<div class="t" style="left:542.69px;top:1466.26px;font-size:13.5px;color:#2f2f2f;transform:scaleX(0.9246);transform-origin:0 0;">₵0.00</div>
<div class="t" style="left:701.69px;top:1466.26px;font-size:13.5px;color:#2f2f2f;transform:scaleX(0.9246);transform-origin:0 0;">₵0.00</div>
<div class="t" style="left:868.69px;top:1466.26px;font-size:13.5px;color:#2f2f2f;transform:scaleX(0.9246);transform-origin:0 0;">₵0.00</div>
<div class="t" style="left:1038.19px;top:1466.26px;font-size:13.5px;color:#2f2f2f;transform:scaleX(0.9246);transform-origin:0 0;">₵0.00</div>
<div class="t" style="left:1179.69px;top:1466.26px;font-size:13.5px;color:#2f2f2f;transform:scaleX(0.9246);transform-origin:0 0;">₵0.00</div>
<div class="t" style="left:1347.69px;top:1466.26px;font-size:13.5px;color:#2f2f2f;transform:scaleX(0.9246);transform-origin:0 0;">₵0.00</div>
<div class="t" style="left:1527.69px;top:1466.26px;font-size:13.5px;color:#2f2f2f;transform:scaleX(0.9246);transform-origin:0 0;">₵0.00</div>
<div style="position:absolute;left:81.00px;top:1555.00px;width:1506.00px;height:1.00px;background:#e3e4e5"></div>
<div class="t" style="left:105.90px;top:1520.16px;font-size:14px;color:#2f2f2f;transform:scaleX(0.9326);transform-origin:0 0;">January 16, 2026</div>
<div class="t" style="left:384.54px;top:1520.16px;font-size:14px;color:#3582c4;transform:scaleX(0.9326);transform-origin:0 0;text-decoration:underline;text-underline-offset:1.5px;">0</div>
<div class="t" style="left:542.69px;top:1520.33px;font-size:13.5px;color:#2f2f2f;transform:scaleX(0.9246);transform-origin:0 0;">₵0.00</div>
<div class="t" style="left:701.69px;top:1520.33px;font-size:13.5px;color:#2f2f2f;transform:scaleX(0.9246);transform-origin:0 0;">₵0.00</div>
<div class="t" style="left:868.69px;top:1520.33px;font-size:13.5px;color:#2f2f2f;transform:scaleX(0.9246);transform-origin:0 0;">₵0.00</div>
<div class="t" style="left:1038.19px;top:1520.33px;font-size:13.5px;color:#2f2f2f;transform:scaleX(0.9246);transform-origin:0 0;">₵0.00</div>
<div class="t" style="left:1179.69px;top:1520.33px;font-size:13.5px;color:#2f2f2f;transform:scaleX(0.9246);transform-origin:0 0;">₵0.00</div>
<div class="t" style="left:1347.69px;top:1520.33px;font-size:13.5px;color:#2f2f2f;transform:scaleX(0.9246);transform-origin:0 0;">₵0.00</div>
<div class="t" style="left:1527.69px;top:1520.33px;font-size:13.5px;color:#2f2f2f;transform:scaleX(0.9246);transform-origin:0 0;">₵0.00</div>
<div style="position:absolute;left:81.00px;top:1609.00px;width:1506.00px;height:1.00px;background:#e3e4e5"></div>
<div class="t" style="left:105.90px;top:1574.23px;font-size:14px;color:#2f2f2f;transform:scaleX(0.9326);transform-origin:0 0;">January 15, 2026</div>
<div class="t" style="left:384.54px;top:1574.23px;font-size:14px;color:#3582c4;transform:scaleX(0.9326);transform-origin:0 0;text-decoration:underline;text-underline-offset:1.5px;">2</div>
<div class="t" style="left:528.81px;top:1574.40px;font-size:13.5px;color:#2f2f2f;transform:scaleX(0.9246);transform-origin:0 0;">₵690.00</div>
<div class="t" style="left:701.69px;top:1574.40px;font-size:13.5px;color:#2f2f2f;transform:scaleX(0.9246);transform-origin:0 0;">₵0.00</div>
<div class="t" style="left:868.69px;top:1574.40px;font-size:13.5px;color:#2f2f2f;transform:scaleX(0.9246);transform-origin:0 0;">₵0.00</div>
<div class="t" style="left:1024.31px;top:1574.40px;font-size:13.5px;color:#2f2f2f;transform:scaleX(0.9246);transform-origin:0 0;">₵690.00</div>
<div class="t" style="left:1179.69px;top:1574.40px;font-size:13.5px;color:#2f2f2f;transform:scaleX(0.9246);transform-origin:0 0;">₵0.00</div>
<div class="t" style="left:1347.69px;top:1574.40px;font-size:13.5px;color:#2f2f2f;transform:scaleX(0.9246);transform-origin:0 0;">₵0.00</div>
<div class="t" style="left:1513.81px;top:1574.40px;font-size:13.5px;color:#2f2f2f;transform:scaleX(0.9246);transform-origin:0 0;">₵690.00</div>
<div style="position:absolute;left:81.00px;top:1663.00px;width:1506.00px;height:1.00px;background:#e3e4e5"></div>
<div class="t" style="left:105.90px;top:1628.29px;font-size:14px;color:#2f2f2f;transform:scaleX(0.9326);transform-origin:0 0;">January 14, 2026</div>
<div class="t" style="left:384.54px;top:1628.29px;font-size:14px;color:#3582c4;transform:scaleX(0.9326);transform-origin:0 0;text-decoration:underline;text-underline-offset:1.5px;">1</div>
<div class="t" style="left:528.81px;top:1628.47px;font-size:13.5px;color:#2f2f2f;transform:scaleX(0.9246);transform-origin:0 0;">₵240.00</div>
<div class="t" style="left:701.69px;top:1628.47px;font-size:13.5px;color:#2f2f2f;transform:scaleX(0.9246);transform-origin:0 0;">₵0.00</div>
<div class="t" style="left:868.69px;top:1628.47px;font-size:13.5px;color:#2f2f2f;transform:scaleX(0.9246);transform-origin:0 0;">₵0.00</div>
<div class="t" style="left:1024.31px;top:1628.47px;font-size:13.5px;color:#2f2f2f;transform:scaleX(0.9246);transform-origin:0 0;">₵240.00</div>
<div class="t" style="left:1179.69px;top:1628.47px;font-size:13.5px;color:#2f2f2f;transform:scaleX(0.9246);transform-origin:0 0;">₵0.00</div>
<div class="t" style="left:1340.75px;top:1628.47px;font-size:13.5px;color:#2f2f2f;transform:scaleX(0.9246);transform-origin:0 0;">₵20.00</div>
<div class="t" style="left:1513.81px;top:1628.47px;font-size:13.5px;color:#2f2f2f;transform:scaleX(0.9246);transform-origin:0 0;">₵260.00</div>
<div style="position:absolute;left:81.00px;top:1717.00px;width:1506.00px;height:1.00px;background:#e3e4e5"></div>
<div class="t" style="left:105.90px;top:1682.36px;font-size:14px;color:#2f2f2f;transform:scaleX(0.9326);transform-origin:0 0;">January 13, 2026</div>
<div class="t" style="left:384.54px;top:1682.36px;font-size:14px;color:#3582c4;transform:scaleX(0.9326);transform-origin:0 0;text-decoration:underline;text-underline-offset:1.5px;">0</div>
<div class="t" style="left:542.69px;top:1682.54px;font-size:13.5px;color:#2f2f2f;transform:scaleX(0.9246);transform-origin:0 0;">₵0.00</div>
<div class="t" style="left:701.69px;top:1682.54px;font-size:13.5px;color:#2f2f2f;transform:scaleX(0.9246);transform-origin:0 0;">₵0.00</div>
<div class="t" style="left:868.69px;top:1682.54px;font-size:13.5px;color:#2f2f2f;transform:scaleX(0.9246);transform-origin:0 0;">₵0.00</div>
<div class="t" style="left:1038.19px;top:1682.54px;font-size:13.5px;color:#2f2f2f;transform:scaleX(0.9246);transform-origin:0 0;">₵0.00</div>
<div class="t" style="left:1179.69px;top:1682.54px;font-size:13.5px;color:#2f2f2f;transform:scaleX(0.9246);transform-origin:0 0;">₵0.00</div>
<div class="t" style="left:1347.69px;top:1682.54px;font-size:13.5px;color:#2f2f2f;transform:scaleX(0.9246);transform-origin:0 0;">₵0.00</div>
<div class="t" style="left:1527.69px;top:1682.54px;font-size:13.5px;color:#2f2f2f;transform:scaleX(0.9246);transform-origin:0 0;">₵0.00</div>
<div style="position:absolute;left:81.00px;top:1772.00px;width:1506.00px;height:1.00px;background:#e3e4e5"></div>
<div class="t" style="left:105.90px;top:1736.43px;font-size:14px;color:#2f2f2f;transform:scaleX(0.9326);transform-origin:0 0;">January 12, 2026</div>
<div class="t" style="left:384.54px;top:1736.43px;font-size:14px;color:#3582c4;transform:scaleX(0.9326);transform-origin:0 0;text-decoration:underline;text-underline-offset:1.5px;">0</div>
<div class="t" style="left:542.69px;top:1736.60px;font-size:13.5px;color:#2f2f2f;transform:scaleX(0.9246);transform-origin:0 0;">₵0.00</div>
<div class="t" style="left:701.69px;top:1736.60px;font-size:13.5px;color:#2f2f2f;transform:scaleX(0.9246);transform-origin:0 0;">₵0.00</div>
<div class="t" style="left:868.69px;top:1736.60px;font-size:13.5px;color:#2f2f2f;transform:scaleX(0.9246);transform-origin:0 0;">₵0.00</div>
<div class="t" style="left:1038.19px;top:1736.60px;font-size:13.5px;color:#2f2f2f;transform:scaleX(0.9246);transform-origin:0 0;">₵0.00</div>
<div class="t" style="left:1179.69px;top:1736.60px;font-size:13.5px;color:#2f2f2f;transform:scaleX(0.9246);transform-origin:0 0;">₵0.00</div>
<div class="t" style="left:1347.69px;top:1736.60px;font-size:13.5px;color:#2f2f2f;transform:scaleX(0.9246);transform-origin:0 0;">₵0.00</div>
<div class="t" style="left:1527.69px;top:1736.60px;font-size:13.5px;color:#2f2f2f;transform:scaleX(0.9246);transform-origin:0 0;">₵0.00</div>
<div style="position:absolute;left:81.00px;top:1826.00px;width:1506.00px;height:1.00px;background:#e3e4e5"></div>
<div class="t" style="left:105.90px;top:1790.50px;font-size:14px;color:#2f2f2f;transform:scaleX(0.9326);transform-origin:0 0;">January 11, 2026</div>
<div class="t" style="left:377.28px;top:1790.50px;font-size:14px;color:#3582c4;transform:scaleX(0.9326);transform-origin:0 0;text-decoration:underline;text-underline-offset:1.5px;">10</div>
<div class="t" style="left:518.40px;top:1790.67px;font-size:13.5px;color:#2f2f2f;transform:scaleX(0.9246);transform-origin:0 0;">₵3,930.00</div>
<div class="t" style="left:701.69px;top:1790.67px;font-size:13.5px;color:#2f2f2f;transform:scaleX(0.9246);transform-origin:0 0;">₵0.00</div>
<div class="t" style="left:868.69px;top:1790.67px;font-size:13.5px;color:#2f2f2f;transform:scaleX(0.9246);transform-origin:0 0;">₵0.00</div>
<div class="t" style="left:1013.90px;top:1790.67px;font-size:13.5px;color:#2f2f2f;transform:scaleX(0.9246);transform-origin:0 0;">₵3,930.00</div>
<div class="t" style="left:1179.69px;top:1790.67px;font-size:13.5px;color:#2f2f2f;transform:scaleX(0.9246);transform-origin:0 0;">₵0.00</div>
<div class="t" style="left:1333.81px;top:1790.67px;font-size:13.5px;color:#2f2f2f;transform:scaleX(0.9246);transform-origin:0 0;">₵200.00</div>
<div class="t" style="left:1503.40px;top:1790.67px;font-size:13.5px;color:#2f2f2f;transform:scaleX(0.9246);transform-origin:0 0;">₵4,130.00</div>
<div style="position:absolute;left:81.00px;top:1880.00px;width:1506.00px;height:1.00px;background:#e3e4e5"></div>
<div class="t" style="left:105.90px;top:1844.57px;font-size:14px;color:#2f2f2f;transform:scaleX(0.9326);transform-origin:0 0;">January 10, 2026</div>
<div class="t" style="left:384.54px;top:1844.57px;font-size:14px;color:#3582c4;transform:scaleX(0.9326);transform-origin:0 0;text-decoration:underline;text-underline-offset:1.5px;">1</div>
<div class="t" style="left:528.81px;top:1844.74px;font-size:13.5px;color:#2f2f2f;transform:scaleX(0.9246);transform-origin:0 0;">₵200.00</div>
<div class="t" style="left:701.69px;top:1844.74px;font-size:13.5px;color:#2f2f2f;transform:scaleX(0.9246);transform-origin:0 0;">₵0.00</div>
<div class="t" style="left:868.69px;top:1844.74px;font-size:13.5px;color:#2f2f2f;transform:scaleX(0.9246);transform-origin:0 0;">₵0.00</div>
<div class="t" style="left:1024.31px;top:1844.74px;font-size:13.5px;color:#2f2f2f;transform:scaleX(0.9246);transform-origin:0 0;">₵200.00</div>
<div class="t" style="left:1179.69px;top:1844.74px;font-size:13.5px;color:#2f2f2f;transform:scaleX(0.9246);transform-origin:0 0;">₵0.00</div>
<div class="t" style="left:1340.75px;top:1844.74px;font-size:13.5px;color:#2f2f2f;transform:scaleX(0.9246);transform-origin:0 0;">₵20.00</div>
<div class="t" style="left:1513.81px;top:1844.74px;font-size:13.5px;color:#2f2f2f;transform:scaleX(0.9246);transform-origin:0 0;">₵220.00</div>
<div style="position:absolute;left:81.00px;top:1934.00px;width:1506.00px;height:1.00px;background:#e3e4e5"></div>
<div class="t" style="left:105.90px;top:1898.63px;font-size:14px;color:#2f2f2f;transform:scaleX(0.9326);transform-origin:0 0;">January 9, 2026</div>
<div class="t" style="left:384.54px;top:1898.63px;font-size:14px;color:#3582c4;transform:scaleX(0.9326);transform-origin:0 0;text-decoration:underline;text-underline-offset:1.5px;">2</div>
<div class="t" style="left:528.81px;top:1898.81px;font-size:13.5px;color:#2f2f2f;transform:scaleX(0.9246);transform-origin:0 0;">₵340.00</div>
<div class="t" style="left:701.69px;top:1898.81px;font-size:13.5px;color:#2f2f2f;transform:scaleX(0.9246);transform-origin:0 0;">₵0.00</div>
<div class="t" style="left:868.69px;top:1898.81px;font-size:13.5px;color:#2f2f2f;transform:scaleX(0.9246);transform-origin:0 0;">₵0.00</div>
<div class="t" style="left:1024.31px;top:1898.81px;font-size:13.5px;color:#2f2f2f;transform:scaleX(0.9246);transform-origin:0 0;">₵340.00</div>
<div class="t" style="left:1179.69px;top:1898.81px;font-size:13.5px;color:#2f2f2f;transform:scaleX(0.9246);transform-origin:0 0;">₵0.00</div>
<div class="t" style="left:1347.69px;top:1898.81px;font-size:13.5px;color:#2f2f2f;transform:scaleX(0.9246);transform-origin:0 0;">₵0.00</div>
<div class="t" style="left:1513.81px;top:1898.81px;font-size:13.5px;color:#2f2f2f;transform:scaleX(0.9246);transform-origin:0 0;">₵340.00</div>
<div style="position:absolute;left:81.00px;top:1988.00px;width:1506.00px;height:1.00px;background:#e3e4e5"></div>
<div class="t" style="left:105.90px;top:1952.70px;font-size:14px;color:#2f2f2f;transform:scaleX(0.9326);transform-origin:0 0;">January 8, 2026</div>
<div class="t" style="left:384.54px;top:1952.70px;font-size:14px;color:#3582c4;transform:scaleX(0.9326);transform-origin:0 0;text-decoration:underline;text-underline-offset:1.5px;">7</div>
<div class="t" style="left:518.40px;top:1952.88px;font-size:13.5px;color:#2f2f2f;transform:scaleX(0.9246);transform-origin:0 0;">₵1,580.00</div>
<div class="t" style="left:701.69px;top:1952.88px;font-size:13.5px;color:#2f2f2f;transform:scaleX(0.9246);transform-origin:0 0;">₵0.00</div>
<div class="t" style="left:868.69px;top:1952.88px;font-size:13.5px;color:#2f2f2f;transform:scaleX(0.9246);transform-origin:0 0;">₵0.00</div>
<div class="t" style="left:1013.90px;top:1952.88px;font-size:13.5px;color:#2f2f2f;transform:scaleX(0.9246);transform-origin:0 0;">₵1,580.00</div>
<div class="t" style="left:1179.69px;top:1952.88px;font-size:13.5px;color:#2f2f2f;transform:scaleX(0.9246);transform-origin:0 0;">₵0.00</div>
<div class="t" style="left:1333.81px;top:1952.88px;font-size:13.5px;color:#2f2f2f;transform:scaleX(0.9246);transform-origin:0 0;">₵120.00</div>
<div class="t" style="left:1503.40px;top:1952.88px;font-size:13.5px;color:#2f2f2f;transform:scaleX(0.9246);transform-origin:0 0;">₵1,700.00</div>
<div style="position:absolute;left:81.00px;top:2042.00px;width:1506.00px;height:1.00px;background:#e3e4e5"></div>
<div class="t" style="left:105.90px;top:2006.77px;font-size:14px;color:#2f2f2f;transform:scaleX(0.9326);transform-origin:0 0;">January 7, 2026</div>
<div class="t" style="left:377.28px;top:2006.77px;font-size:14px;color:#3582c4;transform:scaleX(0.9326);transform-origin:0 0;text-decoration:underline;text-underline-offset:1.5px;">10</div>
<div class="t" style="left:518.40px;top:2006.94px;font-size:13.5px;color:#2f2f2f;transform:scaleX(0.9246);transform-origin:0 0;">₵3,430.00</div>
<div class="t" style="left:701.69px;top:2006.94px;font-size:13.5px;color:#2f2f2f;transform:scaleX(0.9246);transform-origin:0 0;">₵0.00</div>
<div class="t" style="left:868.69px;top:2006.94px;font-size:13.5px;color:#2f2f2f;transform:scaleX(0.9246);transform-origin:0 0;">₵0.00</div>
<div class="t" style="left:1013.90px;top:2006.94px;font-size:13.5px;color:#2f2f2f;transform:scaleX(0.9246);transform-origin:0 0;">₵3,430.00</div>
<div class="t" style="left:1179.69px;top:2006.94px;font-size:13.5px;color:#2f2f2f;transform:scaleX(0.9246);transform-origin:0 0;">₵0.00</div>
<div class="t" style="left:1333.81px;top:2006.94px;font-size:13.5px;color:#2f2f2f;transform:scaleX(0.9246);transform-origin:0 0;">₵230.00</div>
<div class="t" style="left:1503.40px;top:2006.94px;font-size:13.5px;color:#2f2f2f;transform:scaleX(0.9246);transform-origin:0 0;">₵3,660.00</div>
<div style="position:absolute;left:81.00px;top:2096.00px;width:1506.00px;height:1.00px;background:#e3e4e5"></div>
<div class="t" style="left:105.90px;top:2060.84px;font-size:14px;color:#2f2f2f;transform:scaleX(0.9326);transform-origin:0 0;">January 6, 2026</div>
<div class="t" style="left:384.54px;top:2060.84px;font-size:14px;color:#3582c4;transform:scaleX(0.9326);transform-origin:0 0;text-decoration:underline;text-underline-offset:1.5px;">9</div>
<div class="t" style="left:518.40px;top:2061.01px;font-size:13.5px;color:#2f2f2f;transform:scaleX(0.9246);transform-origin:0 0;">₵4,150.00</div>
<div class="t" style="left:701.69px;top:2061.01px;font-size:13.5px;color:#2f2f2f;transform:scaleX(0.9246);transform-origin:0 0;">₵0.00</div>
<div class="t" style="left:868.69px;top:2061.01px;font-size:13.5px;color:#2f2f2f;transform:scaleX(0.9246);transform-origin:0 0;">₵0.00</div>
<div class="t" style="left:1013.90px;top:2061.01px;font-size:13.5px;color:#2f2f2f;transform:scaleX(0.9246);transform-origin:0 0;">₵4,150.00</div>
<div class="t" style="left:1179.69px;top:2061.01px;font-size:13.5px;color:#2f2f2f;transform:scaleX(0.9246);transform-origin:0 0;">₵0.00</div>
<div class="t" style="left:1333.81px;top:2061.01px;font-size:13.5px;color:#2f2f2f;transform:scaleX(0.9246);transform-origin:0 0;">₵255.00</div>
<div class="t" style="left:1503.40px;top:2061.01px;font-size:13.5px;color:#2f2f2f;transform:scaleX(0.9246);transform-origin:0 0;">₵4,405.00</div>
<div style="position:absolute;left:81.00px;top:2150.00px;width:1506.00px;height:1.00px;background:#e3e4e5"></div>
<div class="t" style="left:105.90px;top:2114.91px;font-size:14px;color:#2f2f2f;transform:scaleX(0.9326);transform-origin:0 0;">January 5, 2026</div>
<div class="t" style="left:377.28px;top:2114.91px;font-size:14px;color:#3582c4;transform:scaleX(0.9326);transform-origin:0 0;text-decoration:underline;text-underline-offset:1.5px;">16</div>
<div class="t" style="left:518.40px;top:2115.08px;font-size:13.5px;color:#2f2f2f;transform:scaleX(0.9246);transform-origin:0 0;">₵5,130.00</div>
<div class="t" style="left:701.69px;top:2115.08px;font-size:13.5px;color:#2f2f2f;transform:scaleX(0.9246);transform-origin:0 0;">₵0.00</div>
<div class="t" style="left:868.69px;top:2115.08px;font-size:13.5px;color:#2f2f2f;transform:scaleX(0.9246);transform-origin:0 0;">₵0.00</div>
<div class="t" style="left:1013.90px;top:2115.08px;font-size:13.5px;color:#2f2f2f;transform:scaleX(0.9246);transform-origin:0 0;">₵5,130.00</div>
<div class="t" style="left:1179.69px;top:2115.08px;font-size:13.5px;color:#2f2f2f;transform:scaleX(0.9246);transform-origin:0 0;">₵0.00</div>
<div class="t" style="left:1333.81px;top:2115.08px;font-size:13.5px;color:#2f2f2f;transform:scaleX(0.9246);transform-origin:0 0;">₵350.00</div>
<div class="t" style="left:1503.40px;top:2115.08px;font-size:13.5px;color:#2f2f2f;transform:scaleX(0.9246);transform-origin:0 0;">₵5,480.00</div>
<div style="position:absolute;left:81.00px;top:2204.00px;width:1506.00px;height:1.00px;background:#e3e4e5"></div>
<div class="t" style="left:105.90px;top:2168.97px;font-size:14px;color:#2f2f2f;transform:scaleX(0.9326);transform-origin:0 0;">January 4, 2026</div>
<div class="t" style="left:384.54px;top:2168.97px;font-size:14px;color:#3582c4;transform:scaleX(0.9326);transform-origin:0 0;text-decoration:underline;text-underline-offset:1.5px;">2</div>
<div class="t" style="left:528.81px;top:2169.15px;font-size:13.5px;color:#2f2f2f;transform:scaleX(0.9246);transform-origin:0 0;">₵180.00</div>
<div class="t" style="left:701.69px;top:2169.15px;font-size:13.5px;color:#2f2f2f;transform:scaleX(0.9246);transform-origin:0 0;">₵0.00</div>
<div class="t" style="left:868.69px;top:2169.15px;font-size:13.5px;color:#2f2f2f;transform:scaleX(0.9246);transform-origin:0 0;">₵0.00</div>
<div class="t" style="left:1024.31px;top:2169.15px;font-size:13.5px;color:#2f2f2f;transform:scaleX(0.9246);transform-origin:0 0;">₵180.00</div>
<div class="t" style="left:1179.69px;top:2169.15px;font-size:13.5px;color:#2f2f2f;transform:scaleX(0.9246);transform-origin:0 0;">₵0.00</div>
<div class="t" style="left:1340.75px;top:2169.15px;font-size:13.5px;color:#2f2f2f;transform:scaleX(0.9246);transform-origin:0 0;">₵40.00</div>
<div class="t" style="left:1513.81px;top:2169.15px;font-size:13.5px;color:#2f2f2f;transform:scaleX(0.9246);transform-origin:0 0;">₵220.00</div>
<div style="position:absolute;left:81.00px;top:2258.00px;width:1506.00px;height:1.00px;background:#e3e4e5"></div>
<div class="t" style="left:105.90px;top:2223.04px;font-size:14px;color:#2f2f2f;transform:scaleX(0.9326);transform-origin:0 0;">January 3, 2026</div>
<div class="t" style="left:384.54px;top:2223.04px;font-size:14px;color:#3582c4;transform:scaleX(0.9326);transform-origin:0 0;text-decoration:underline;text-underline-offset:1.5px;">0</div>
<div class="t" style="left:542.69px;top:2223.22px;font-size:13.5px;color:#2f2f2f;transform:scaleX(0.9246);transform-origin:0 0;">₵0.00</div>
<div class="t" style="left:701.69px;top:2223.22px;font-size:13.5px;color:#2f2f2f;transform:scaleX(0.9246);transform-origin:0 0;">₵0.00</div>
<div class="t" style="left:868.69px;top:2223.22px;font-size:13.5px;color:#2f2f2f;transform:scaleX(0.9246);transform-origin:0 0;">₵0.00</div>
<div class="t" style="left:1038.19px;top:2223.22px;font-size:13.5px;color:#2f2f2f;transform:scaleX(0.9246);transform-origin:0 0;">₵0.00</div>
<div class="t" style="left:1179.69px;top:2223.22px;font-size:13.5px;color:#2f2f2f;transform:scaleX(0.9246);transform-origin:0 0;">₵0.00</div>
<div class="t" style="left:1347.69px;top:2223.22px;font-size:13.5px;color:#2f2f2f;transform:scaleX(0.9246);transform-origin:0 0;">₵0.00</div>
<div class="t" style="left:1527.69px;top:2223.22px;font-size:13.5px;color:#2f2f2f;transform:scaleX(0.9246);transform-origin:0 0;">₵0.00</div>
<div style="position:absolute;left:81.00px;top:2312.00px;width:1506.00px;height:1.00px;background:#e3e4e5"></div>
<div class="t" style="left:105.90px;top:2277.11px;font-size:14px;color:#2f2f2f;transform:scaleX(0.9326);transform-origin:0 0;">January 2, 2026</div>
<div class="t" style="left:384.54px;top:2277.11px;font-size:14px;color:#3582c4;transform:scaleX(0.9326);transform-origin:0 0;text-decoration:underline;text-underline-offset:1.5px;">0</div>
<div class="t" style="left:542.69px;top:2277.28px;font-size:13.5px;color:#2f2f2f;transform:scaleX(0.9246);transform-origin:0 0;">₵0.00</div>
<div class="t" style="left:701.69px;top:2277.28px;font-size:13.5px;color:#2f2f2f;transform:scaleX(0.9246);transform-origin:0 0;">₵0.00</div>
<div class="t" style="left:868.69px;top:2277.28px;font-size:13.5px;color:#2f2f2f;transform:scaleX(0.9246);transform-origin:0 0;">₵0.00</div>
<div class="t" style="left:1038.19px;top:2277.28px;font-size:13.5px;color:#2f2f2f;transform:scaleX(0.9246);transform-origin:0 0;">₵0.00</div>
<div class="t" style="left:1179.69px;top:2277.28px;font-size:13.5px;color:#2f2f2f;transform:scaleX(0.9246);transform-origin:0 0;">₵0.00</div>
<div class="t" style="left:1347.69px;top:2277.28px;font-size:13.5px;color:#2f2f2f;transform:scaleX(0.9246);transform-origin:0 0;">₵0.00</div>
<div class="t" style="left:1527.69px;top:2277.28px;font-size:13.5px;color:#2f2f2f;transform:scaleX(0.9246);transform-origin:0 0;">₵0.00</div>
<div style="position:absolute;left:81.00px;top:2366.00px;width:1506.00px;height:1.00px;background:#e3e4e5"></div>
<div class="t" style="left:105.90px;top:2331.18px;font-size:14px;color:#2f2f2f;transform:scaleX(0.9326);transform-origin:0 0;">January 1, 2026</div>
<div class="t" style="left:384.54px;top:2331.18px;font-size:14px;color:#3582c4;transform:scaleX(0.9326);transform-origin:0 0;text-decoration:underline;text-underline-offset:1.5px;">0</div>
<div class="t" style="left:542.69px;top:2331.35px;font-size:13.5px;color:#2f2f2f;transform:scaleX(0.9246);transform-origin:0 0;">₵0.00</div>
<div class="t" style="left:701.69px;top:2331.35px;font-size:13.5px;color:#2f2f2f;transform:scaleX(0.9246);transform-origin:0 0;">₵0.00</div>
<div class="t" style="left:868.69px;top:2331.35px;font-size:13.5px;color:#2f2f2f;transform:scaleX(0.9246);transform-origin:0 0;">₵0.00</div>
<div class="t" style="left:1038.19px;top:2331.35px;font-size:13.5px;color:#2f2f2f;transform:scaleX(0.9246);transform-origin:0 0;">₵0.00</div>
<div class="t" style="left:1179.69px;top:2331.35px;font-size:13.5px;color:#2f2f2f;transform:scaleX(0.9246);transform-origin:0 0;">₵0.00</div>
<div class="t" style="left:1347.69px;top:2331.35px;font-size:13.5px;color:#2f2f2f;transform:scaleX(0.9246);transform-origin:0 0;">₵0.00</div>
<div class="t" style="left:1527.69px;top:2331.35px;font-size:13.5px;color:#2f2f2f;transform:scaleX(0.9246);transform-origin:0 0;">₵0.00</div>
<div class="t" style="left:327.49px;top:2384.35px;font-size:14px;color:#1e1e1e;font-weight:bold;transform:scaleX(0.9150);transform-origin:0 0;">25</div>
<div class="t" style="left:341.74px;top:2384.35px;font-size:14px;color:#2f2f2f;transform:scaleX(0.9500);transform-origin:0 0;white-space:pre;"> days</div>
<div class="t" style="left:390.53px;top:2384.35px;font-size:14px;color:#1e1e1e;font-weight:bold;transform:scaleX(0.9150);transform-origin:0 0;">81</div>
<div class="t" style="left:404.78px;top:2384.35px;font-size:14px;color:#2f2f2f;transform:scaleX(0.9500);transform-origin:0 0;white-space:pre;"> orders</div>
<div class="t" style="left:463.17px;top:2384.35px;font-size:14px;color:#1e1e1e;font-weight:bold;transform:scaleX(0.9150);transform-origin:0 0;">₵25,150.00</div>
<div class="t" style="left:529.41px;top:2384.35px;font-size:14px;color:#2f2f2f;transform:scaleX(0.9500);transform-origin:0 0;white-space:pre;"> Gross sales</div>
<div class="t" style="left:620.32px;top:2384.35px;font-size:14px;color:#1e1e1e;font-weight:bold;transform:scaleX(0.9150);transform-origin:0 0;">₵710.00</div>
<div class="t" style="left:668.76px;top:2384.35px;font-size:14px;color:#2f2f2f;transform:scaleX(0.9500);transform-origin:0 0;white-space:pre;"> Returns</div>
<div class="t" style="left:736.02px;top:2384.35px;font-size:14px;color:#1e1e1e;font-weight:bold;transform:scaleX(0.9150);transform-origin:0 0;">₵0.00</div>
<div class="t" style="left:770.20px;top:2384.35px;font-size:14px;color:#2f2f2f;transform:scaleX(0.9500);transform-origin:0 0;white-space:pre;"> Coupons</div>
<div class="t" style="left:844.14px;top:2384.35px;font-size:14px;color:#1e1e1e;font-weight:bold;transform:scaleX(0.9150);transform-origin:0 0;">₵24,460.00</div>
<div class="t" style="left:910.38px;top:2384.35px;font-size:14px;color:#2f2f2f;transform:scaleX(0.9500);transform-origin:0 0;white-space:pre;"> Net sales</div>
<div class="t" style="left:986.52px;top:2384.35px;font-size:14px;color:#1e1e1e;font-weight:bold;transform:scaleX(0.9150);transform-origin:0 0;">₵0.00</div>
<div class="t" style="left:1020.70px;top:2384.35px;font-size:14px;color:#2f2f2f;transform:scaleX(0.9500);transform-origin:0 0;white-space:pre;"> Taxes</div>
<div class="t" style="left:1075.90px;top:2384.35px;font-size:14px;color:#1e1e1e;font-weight:bold;transform:scaleX(0.9150);transform-origin:0 0;">₵1,475.00</div>
<div class="t" style="left:1135.02px;top:2384.35px;font-size:14px;color:#2f2f2f;transform:scaleX(0.9500);transform-origin:0 0;white-space:pre;"> Shipping</div>
<div class="t" style="left:1207.48px;top:2384.35px;font-size:14px;color:#1e1e1e;font-weight:bold;transform:scaleX(0.9150);transform-origin:0 0;">₵25,935.00</div>
<div class="t" style="left:1273.72px;top:2384.35px;font-size:14px;color:#2f2f2f;transform:scaleX(0.9500);transform-origin:0 0;white-space:pre;"> Total sales</div>
<div class="t" style="left:607.70px;top:2531.45px;font-size:14px;color:#50575e;transform:scaleX(0.9670);transform-origin:0 0;white-space:pre;">© 2026 L&amp;M Wigs and Bundles Paradise | Developed by </div>
<div class="t" style="left:950.83px;top:2531.45px;font-size:14px;color:#3582c4;transform:scaleX(0.9670);transform-origin:0 0;text-decoration:underline;">Genisoft Inc</div>
<div class="t" style="left:1023.07px;top:2531.45px;font-size:14px;color:#50575e;transform:scaleX(0.9670);transform-origin:0 0;white-space:pre;"> | v3.4</div>
</body></html>
